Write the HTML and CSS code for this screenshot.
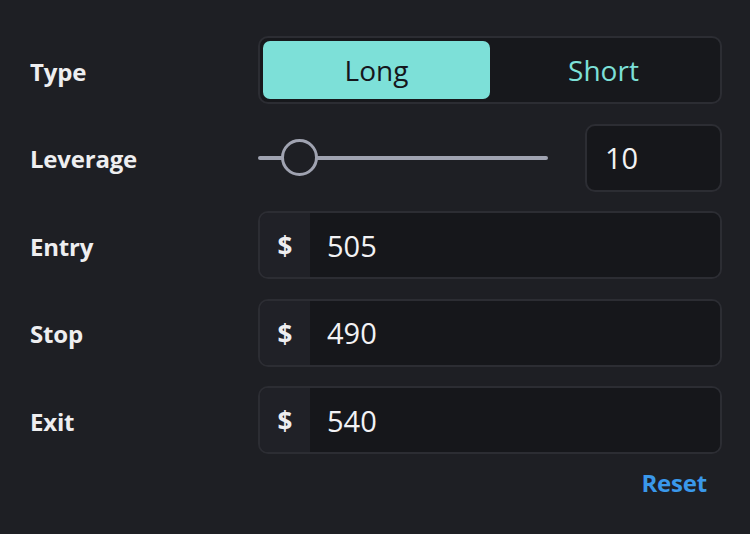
FILE: index.html
```html
<!DOCTYPE html>
<html lang="en">
<head>
    <meta charset="UTF-8">
    <meta name="viewport" content="width=device-width, initial-scale=1.0">
    <title>Position Calculator</title>
    <link rel="stylesheet" href="styles.css">
</head>
<body>
    <div class="panel">
        <div class="row">
            <span class="label">Type</span>
            <div class="toggle">
                <button class="toggle-btn active" type="button">Long</button>
                <button class="toggle-btn" type="button">Short</button>
            </div>
        </div>

        <div class="row">
            <label class="label" for="leverage">Leverage</label>
            <div class="leverage">
                <input type="range" id="leverage" min="1" max="100" value="10">
                <input type="text" class="field number" id="leverageValue" value="10">
            </div>
        </div>

        <div class="row">
            <label class="label" for="entry">Entry</label>
            <div class="input-group">
                <span class="addon">$</span>
                <input type="text" class="field" id="entry" value="505">
            </div>
        </div>

        <div class="row">
            <label class="label" for="stop">Stop</label>
            <div class="input-group">
                <span class="addon">$</span>
                <input type="text" class="field" id="stop" value="490">
            </div>
        </div>

        <div class="row">
            <label class="label" for="exit">Exit</label>
            <div class="input-group">
                <span class="addon">$</span>
                <input type="text" class="field" id="exit" value="540">
            </div>
        </div>

        <div class="actions">
            <button class="reset" type="button">Reset</button>
        </div>
    </div>
</body>
</html>
```

FILE: styles.css
```css
body {
    margin: 0;
    background-color: #1e1f24;
    color: #eeeef0;
    font-family: "Open Sans", "Noto Sans", sans-serif;
}

.panel {
    display: flex;
    flex-direction: column;
    gap: 19.5px;
    padding: 36px 28px 0 30px;
}

.row {
    display: grid;
    grid-template-columns: 228px 1fr;
    align-items: center;
    height: 68px;
}

.label {
    font-size: 24px;
    font-weight: 700;
    letter-spacing: -0.2px;
    padding-top: 2px;
}

.toggle {
    display: grid;
    grid-template-columns: 1fr 1fr;
    height: 68px;
    padding: 3px;
    box-sizing: border-box;
    background-color: #17181c;
    border: 2px solid #2c2d33;
    border-radius: 10px;
}

.toggle-btn {
    border: none;
    border-radius: 7px;
    background: transparent;
    color: #7de0d8;
    font-family: inherit;
    font-size: 28px;
    cursor: pointer;
}

    .toggle-btn.active {
        background-color: #7de0d8;
        color: #15161c;
    }

.leverage {
    display: flex;
    align-items: center;
    gap: 37px;
}

input[type="range"] {
    -webkit-appearance: none;
    appearance: none;
    width: 290px;
    height: 40px;
    margin: 0;
    background: transparent;
}

    input[type="range"]::-webkit-slider-runnable-track {
        height: 4px;
        background-color: #a0a3b1;
        border-radius: 2px;
    }

    input[type="range"]::-webkit-slider-thumb {
        -webkit-appearance: none;
        width: 37px;
        height: 37px;
        margin-top: -16.5px;
        box-sizing: border-box;
        border: 3px solid #a0a3b1;
        border-radius: 50%;
        background-color: #1e1f24;
    }

.field {
    width: 100%;
    height: 100%;
    box-sizing: border-box;
    padding: 0 17px;
    background-color: #16171b;
    border: none;
    color: #f2f2f4;
    font-family: inherit;
    font-size: 29px;
    outline: none;
}

.number {
    width: 137px;
    height: 68px;
    padding-left: 18px;
    border: 2px solid #2c2d33;
    border-radius: 10px;
}

.input-group {
    display: flex;
    height: 68px;
    box-sizing: border-box;
    border: 2px solid #2c2d33;
    border-radius: 10px;
    overflow: hidden;
}

.addon {
    display: flex;
    align-items: center;
    justify-content: center;
    width: 50px;
    flex-shrink: 0;
    padding-top: 2px;
    background-color: #202127;
    font-size: 26px;
    font-weight: 700;
}

.actions {
    display: flex;
    justify-content: flex-end;
    margin-top: -8px;
}

.reset {
    padding: 0 15px;
    height: 34px;
    border: none;
    background: transparent;
    color: #3a98ea;
    font-family: inherit;
    font-size: 24px;
    font-weight: 700;
    letter-spacing: -0.2px;
    cursor: pointer;
}
```
